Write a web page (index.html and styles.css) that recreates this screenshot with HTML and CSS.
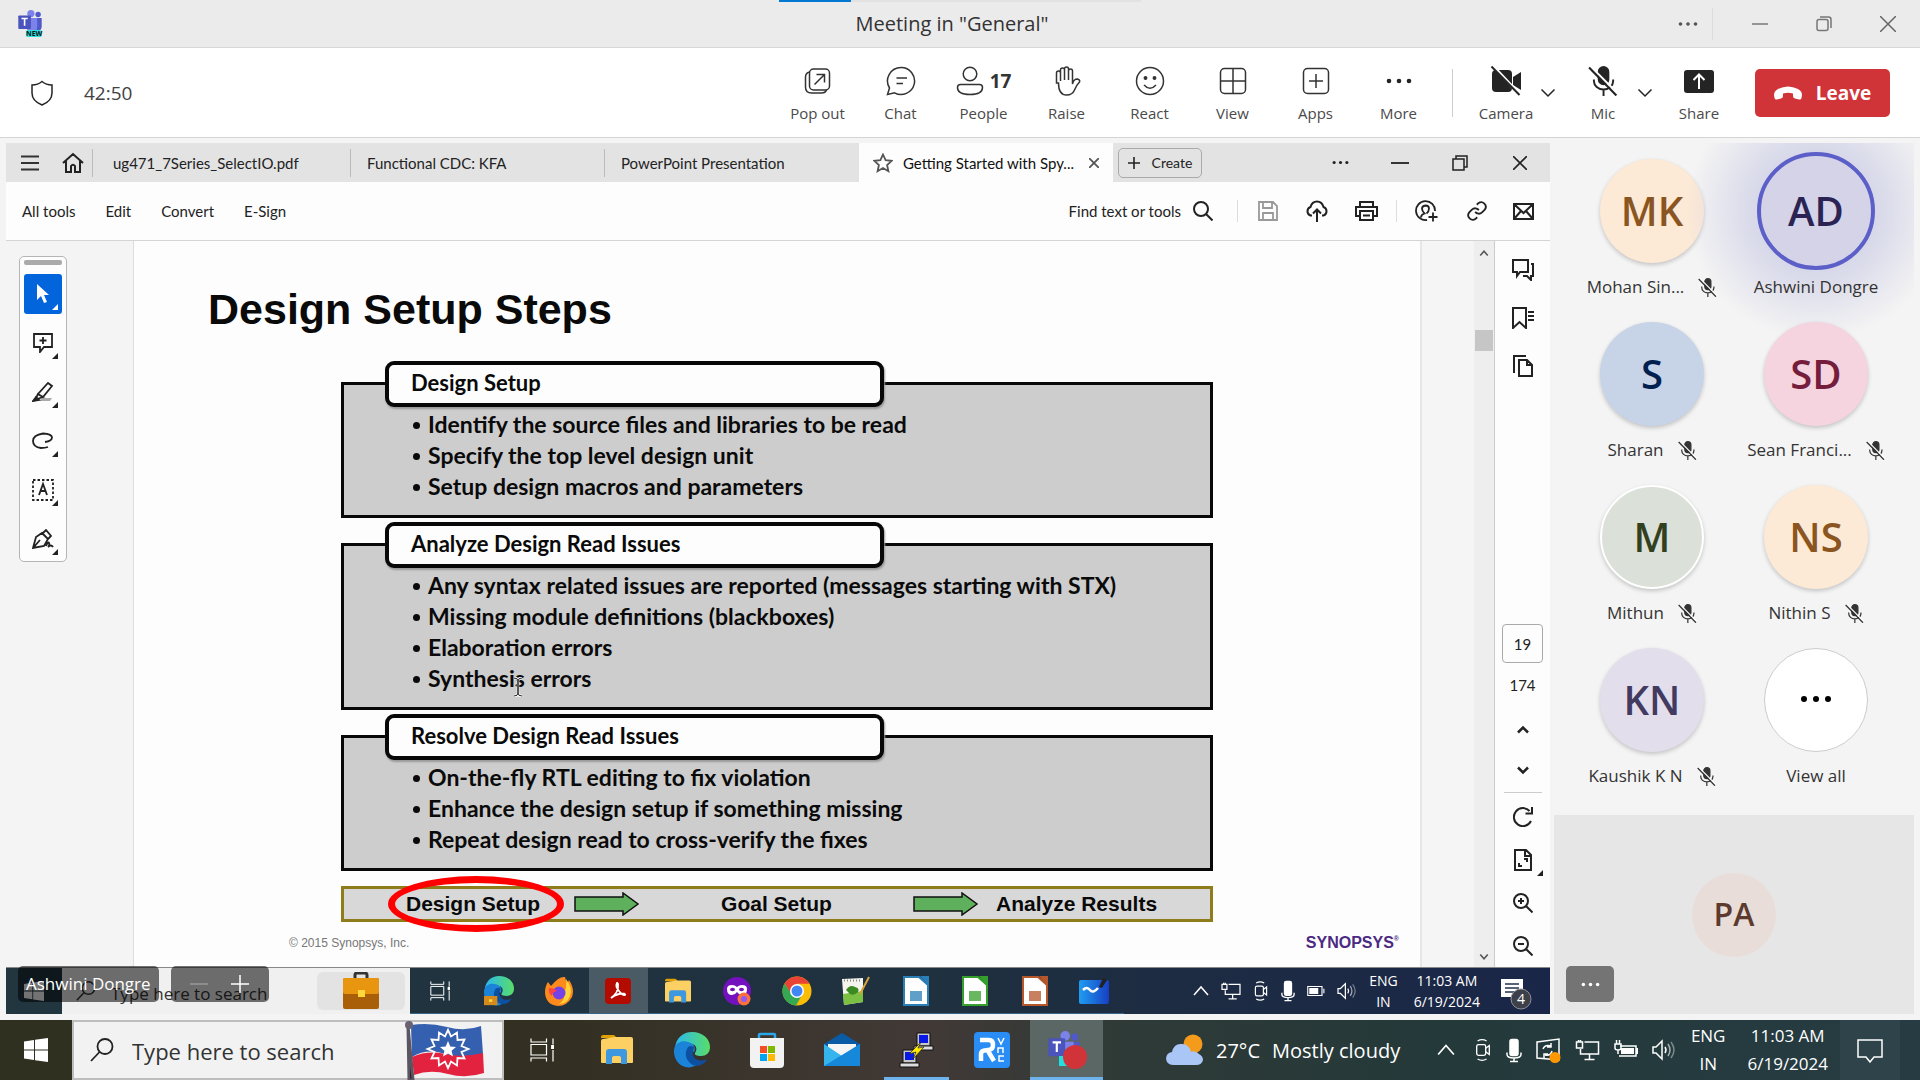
FILE: index.html
```html
<!DOCTYPE html>
<html lang="en">
<head>
<meta charset="utf-8">
<title>Meeting in "General"</title>
<link rel="stylesheet" href="styles.css">
</head>
<body>
<svg class="defs" aria-hidden="true">
  <defs>
    <symbol id="dots" viewBox="0 0 24 24"><g fill="currentColor"><circle cx="3" cy="12" r="2.2"/><circle cx="12" cy="12" r="2.2"/><circle cx="21" cy="12" r="2.2"/></g></symbol>
    <symbol id="mic-off" viewBox="0 0 28 28"><g fill="none" stroke="currentColor" stroke-width="1.8"><rect x="10" y="1" width="9" height="16" rx="4.5" fill="currentColor"/><path d="M5.500 12.500v1.500a9 8 0 0 0 18 0v-1.500M14.500 22v6"/><path d="M2.500 0.500L28 26" stroke="#fff" stroke-width="2"/><path d="M1 1.500L26.500 27.500" stroke-width="2"/></g></symbol>
    <symbol id="mic" viewBox="0 0 16 24"><g fill="none" stroke="#fff" stroke-width="1.5"><rect x="4" y="1" width="8" height="16" rx="2" fill="#fff"/><path d="M1 14v2q0 3.500 7 3.500t7-3.500v-2M8 19v3.500M4 23h8"/></g></symbol>
    <symbol id="chev-down" viewBox="0 0 16 16"><path d="M1.500 4.500L8 11l6.500-6.500" fill="none" stroke="currentColor" stroke-width="1.5"/></symbol>
    <symbol id="chev-up" viewBox="0 0 16 16"><path d="M1 12l7-8 7 8" fill="none" stroke="currentColor" stroke-width="1.5"/></symbol>
    <symbol id="lens-left" viewBox="0 0 24 24"><g fill="none" stroke="currentColor" stroke-width="1.8"><circle cx="15" cy="8.500" r="7.5"/><path d="M9.500 14L1 23"/></g></symbol>
    <symbol id="taskview" viewBox="0 0 24 24"><g fill="none" stroke="#fff" stroke-width="1.2"><path d="M1 .5v3.500h15.500V.5M1 23.500V20h15.500v3.500M1 6.500h15.500v10.500H1zM23 .5v6M23 12v11.500"/><path d="M21.700 7.500h2.300v3h-2.300z" fill="#fff"/></g></symbol>
    <symbol id="folder" viewBox="0 0 32 32"><path d="M0 3q0-2 2-2h11l3 3h-16z" fill="#e0a100"/><path d="M0 7q0-2 2-2l12-2h16q2 0 2 2v23q0 1-1 1H1q-1 0-1-1z" fill="#fdd063"/><path d="M5 18q0-3 3-3h15q3 0 3 3v12h-6v-6q0-2-2-2h-5q-2 0-2 2v6H5z" fill="#3d98e0"/></symbol>
    <symbol id="edge" viewBox="0 0 36 36"><defs><linearGradient id="eg" x1="0" x2="1"><stop offset="0" stop-color="#2bb8f0"/><stop offset="1" stop-color="#58dd68"/></linearGradient></defs><path d="M1 16C2 6 9 0 18 0c11 0 18 7 18 15 0 6-4 9-9 9-4 0-7-1-6-3 3-4 1-9-4-9-7-1-12 2-16 4z" fill="url(#eg)"/><path d="M0 18c1-8 9-10 14-8 6 1 8 6 6 10-5-3-9 1-6 6 2 4 6 6 10 6-12 9-25-1-24-14z" fill="#1b83d8"/><path d="M13 17c-3 6 0 13 6 16 6 2 12-1 14-6-5 3-12 2-14-4-1-4 1-6 1-8-3-2-6-1-7 2z" fill="#0d4fa0"/></symbol>
    <symbol id="monitor" viewBox="0 0 24 22"><g fill="none" stroke="#fff" stroke-width="1.5"><path d="M9 3h14v12H5v-5M14 15v5M9 20.500h10M1 3h6v6H1zM3 1v2M5 1v2"/></g></symbol>
    <symbol id="tray-cam" viewBox="0 0 20 26"><g fill="none" stroke="#fff" stroke-width="1.5"><rect x="3" y="7" width="10" height="12" rx="2"/><path d="M13 11l4-3v10l-4-3M4 3q5-3 10 0M4 23q5 3 10 0"/></g></symbol>
    <symbol id="battery" viewBox="0 0 24 16"><path d="M1 2h19v12H1zM22.500 5v6" fill="none" stroke="#fff" stroke-width="1.5"/><path d="M3 4h12v8H3z" fill="#fff"/></symbol>
    <symbol id="speaker" viewBox="0 0 24 22"><g fill="none" stroke="#fff" stroke-width="1.5"><path d="M1 8h3l6-6v18l-6-6H1z"/><path d="M13 8q2 3 0 6"/><path d="M16 5q4 6 0 12" opacity=".6"/><path d="M19 3q6 8 0 16" opacity=".4"/></g></symbol>
    <symbol id="windows" viewBox="0 0 24 24"><path fill="#fff" d="M0 3.500l10-1.500v9.500H0zM11 1.800L24 0v11.500H11zM0 12.500h10V22L0 20.500zM11 12.500h13V24l-13-1.800z"/></symbol>
    <symbol id="corner" viewBox="0 0 6 6"><path d="M6 0v6H0z" fill="currentColor"/></symbol>
    <symbol id="doc" viewBox="0 0 26 30"><path d="M1 1h15l9 8v20H1z" fill="#fff" stroke="currentColor" stroke-width="2"/><path d="M17 0h9v10z" fill="currentColor"/></symbol>
    <symbol id="teams" viewBox="0 0 26 30"><circle cx="14" cy="4" r="4" fill="#7b83eb"/><circle cx="22" cy="5" r="3" fill="#5059c9"/><path d="M17 9h9v9q0 5-5 5h-4z" fill="#5059c9"/><path d="M9 9h12v10q0 5-6 5t-6-5z" fill="#7b83eb"/><rect y="6" width="14" height="15" rx="1" fill="#4b53bc"/><path d="M3.500 9.500h7M7 9.500v8" stroke="#fff" stroke-width="1.8"/></symbol>
  </defs>
</svg>

<header class="titlebar">
  <div class="app-logo"><svg width="24" height="27"><use href="#teams"/></svg><span class="new-tag">NEW</span></div>
  <div class="progress"><i></i></div>
  <h1>Meeting in "General"</h1>
  <div class="win-controls">
    <button class="more" aria-label="More"><svg width="20" height="20"><use href="#dots"/></svg></button>
    <button aria-label="Minimize"><svg width="16" height="16" viewBox="0 0 16 16"><path d="M0 8h16" stroke="#777" stroke-width="1.5"/></svg></button>
    <button aria-label="Restore"><svg width="16" height="16" viewBox="0 0 16 16" fill="none" stroke="#777" stroke-width="1.5"><rect x="1" y="3.500" width="11" height="11" rx="2"/><path d="M4 1h8.500q2.500 0 2.500 2.500V12"/></svg></button>
    <button aria-label="Close"><svg width="16" height="16" viewBox="0 0 16 16"><path d="M0 0l16 16M16 0L0 16" stroke="#666" stroke-width="1.5"/></svg></button>
  </div>
</header>

<div class="toolbar">
  <svg width="24" height="26" viewBox="0 0 24 26" fill="none" stroke="#242424" stroke-width="1.5"><path d="M12 1.500q4 3.500 10 3.500v8q0 8-10 12Q2 21 2 13V5q6 0 10-3.500z"/></svg>
  <span class="timer">42:50</span>
  <nav class="actions">
    <button><svg width="30" height="30" viewBox="0 0 30 30"><rect x="6.500" y="3" width="20" height="21" rx="4"/><path d="M6.500 6Q2.500 7 2.500 11v10q0 6 6 6h10q4 0 5-3M11.500 18.500L21.500 8.500M13.500 8.500h8v8"/></svg><span>Pop out</span></button>
    <button><svg width="30" height="30" viewBox="0 0 30 30"><path d="M15 1.500a13.500 13.500 0 1 1-6.500 25.300L1.500 28.500l2-6.500A13.500 13.500 0 0 1 15 1.500zM10.500 12h10.500M10.500 17.500h6.500"/></svg><span>Chat</span></button>
    <button><span class="with-count"><svg width="28" height="30" viewBox="0 0 28 30"><circle cx="14" cy="8" r="6.800"/><path d="M4.500 18.500h19q3 0 3 3 0 7-12.500 7T1.500 21.500q0-3 3-3z"/></svg><b>17</b></span><span>People</span></button>
    <button><svg width="30" height="30" viewBox="0 0 30 30"><path d="M4.500 17V7q0-2 2-2t2 2v8V4q0-2 2-2t2 2v10V3q0-2 2-2t2 2v11V5q0-2 2-2t2 2v13q1-5 5-5 3 1 2 3-3 3-5 8-2 5-8 5-8 0-8-12z"/></svg><span>Raise</span></button>
    <button><svg width="30" height="30" viewBox="0 0 30 30"><circle cx="15" cy="15" r="13.500"/><path d="M9 19q6 6.500 12 0"/><circle cx="10.500" cy="12" r="1.200" fill="#333"/><circle cx="19.500" cy="12" r="1.200" fill="#333"/></svg><span>React</span></button>
    <button><svg width="30" height="30" viewBox="0 0 30 30"><rect x="2.500" y="2.500" width="25" height="25" rx="4"/><path d="M15 2.500v25M2.500 15h25"/></svg><span>View</span></button>
    <button><svg width="30" height="30" viewBox="0 0 30 30"><rect x="2.500" y="2.500" width="25" height="25" rx="4"/><path d="M15 8v14M8 15h14"/></svg><span>Apps</span></button>
    <button><svg class="solid" width="30" height="30" viewBox="0 0 30 30"><circle cx="5" cy="15" r="2.300"/><circle cx="15" cy="15" r="2.300"/><circle cx="25" cy="15" r="2.300"/></svg><span>More</span></button>
  </nav>
  <i class="rule"></i>
  <button class="device"><svg class="solid" width="32" height="30" viewBox="0 0 32 30"><rect x="2" y="4" width="20" height="22" rx="4"/><path d="M23 11l8-5v18l-8-5z"/><path d="M3 0l28 30" stroke="#fff" stroke-width="3"/><path d="M1.500 .5l28 28.500" stroke="#242424" stroke-width="2"/></svg><span>Camera</span></button>
  <button class="chev" aria-label="Camera options"><svg width="16" height="16"><use href="#chev-down"/></svg></button>
  <button class="device mic"><svg class="solid" width="30" height="30"><use href="#mic-off"/></svg><span>Mic</span></button>
  <button class="chev" aria-label="Mic options"><svg width="16" height="16"><use href="#chev-down"/></svg></button>
  <button class="device share"><svg class="solid" width="30" height="30" viewBox="0 0 30 30"><rect y="4" width="30" height="23" rx="3"/><path d="M15 23V9M9.500 14L15 8.500l5.500 5.500" fill="none" stroke="#fff" stroke-width="2"/></svg><span>Share</span></button>
  <button class="leave"><svg width="28" height="14" viewBox="0 0 28 14"><path fill="#fff" d="M0 9q0-4 4-6Q14-2 24 3q4 2 4 6l-.5 3q-.5 2-2.500 1.500l-4-1q-2-.5-2-2.500V7.500q-5-1.500-10 0V10q0 2-2 2.500l-4 1Q1 14 .5 12z"/></svg>Leave</button>
</div>

<main class="stage">
  <section class="shared">
    <div class="pdf-tabs">
      <button class="menu" aria-label="Menu"><svg width="18" height="16" viewBox="0 0 18 16"><path d="M0 1.500h18M0 8h18M0 14.500h18" stroke="#333" stroke-width="2"/></svg></button>
      <button class="home" aria-label="Home"><svg width="22" height="22" viewBox="0 0 22 20" fill="none" stroke="#222" stroke-width="2"><path d="M1 10L11 1l10 9M4 8v11h5v-6q2-2.500 4 0v6h5V8"/></svg></button>
      <button class="tab first">ug471_7Series_SelectIO.pdf</button>
      <button class="tab">Functional CDC: KFA</button>
      <button class="tab last">PowerPoint Presentation</button>
      <div class="tab active"><svg width="20" height="20" viewBox="0 0 20 20" fill="none" stroke="#555" stroke-width="1.8"><path d="M10 1.500l2.600 5.700 6 .6-4.500 4.200 1.300 6.200L10 15l-5.400 3.200L5.900 12 1.400 7.800l6-.6z"/></svg><span>Getting Started with Spy...</span><button aria-label="Close tab"><svg width="10" height="10" viewBox="0 0 10 10"><path d="M0 0l10 10M10 0L0 10" stroke="#555" stroke-width="1.8"/></svg></button></div>
      <button class="create"><svg width="12" height="12" viewBox="0 0 12 12"><path d="M6 0v12M0 6h12" stroke="#222" stroke-width="1.6"/></svg>Create</button>
      <div class="pdf-win">
        <button aria-label="More"><svg width="17" height="17"><use href="#dots"/></svg></button>
        <button aria-label="Minimize"><svg width="18" height="16" viewBox="0 0 18 16"><path d="M0 8h18" stroke="#222" stroke-width="1.8"/></svg></button>
        <button aria-label="Restore"><svg width="16" height="16" viewBox="0 0 16 16" fill="none" stroke="#222" stroke-width="1.5"><path d="M1 4h11v11H1zM4 4V1h11v11h-3"/></svg></button>
        <button aria-label="Close"><svg width="14" height="14" viewBox="0 0 14 14"><path d="M0 0l14 14M14 0L0 14" stroke="#222" stroke-width="1.6"/></svg></button>
      </div>
    </div>

    <div class="pdf-menu">
      <button>All tools</button><button>Edit</button><button>Convert</button><button>E-Sign</button>
      <button class="find">Find text or tools <svg width="20" height="20" viewBox="0 0 20 20" fill="none" stroke="#222" stroke-width="2"><circle cx="8" cy="8" r="7"/><path d="M13 13l6.500 6.500"/></svg></button>
      <div class="file-tools">
        <button class="wide save" aria-label="Save"><svg width="20" height="20" viewBox="0 0 20 20" fill="none" stroke="#999" stroke-width="1.8"><path d="M1 1h14l4 4v14H1zM5 1v6h9V1M5 19v-7h10v7"/></svg></button>
        <button aria-label="Upload"><svg width="24" height="22" viewBox="0 0 24 22" fill="none" stroke="#222" stroke-width="2"><path d="M7 15.500H5.500a4.500 4.500 0 0 1 0-8.500Q7 1.500 12 1.500T18.500 7a4.500 4.500 0 0 1 0 8.500H17M12 22V10M8 13.500l4-4 4 4"/></svg></button>
        <button class="wide print" aria-label="Print"><svg width="23" height="20" viewBox="0 0 23 20" fill="none" stroke="#222" stroke-width="2"><path d="M5 6V1h13v5M5 15H1V6h21v9h-4M5 10h13v9H5zM8 14.500h7"/></svg></button>
        <button class="wide" aria-label="Add person"><svg width="24" height="22" viewBox="0 0 24 22" fill="none" stroke="#222" stroke-width="1.8"><path d="M12 20A9.500 9.500 0 1 1 20 11M6 17.500q0-3 3.500-4Q7 11 7 8.500t3.500-3Q14 5.500 14 8.500t-2.500 5M18 12.500v9M13.500 17h9"/></svg></button>
        <button aria-label="Copy link"><svg width="22" height="22" viewBox="0 0 24 24" fill="none" stroke="#222" stroke-width="2"><path d="M10 13a5 5 0 0 0 7.500.5l3-3a5 5 0 0 0-7-7l-1.700 1.700M14 11a5 5 0 0 0-7.500-.5l-3 3a5 5 0 0 0 7 7l1.700-1.700"/></svg></button>
        <button class="mail" aria-label="Email"><svg width="21" height="17" viewBox="0 0 21 17" fill="none" stroke="#222" stroke-width="2"><path d="M1 1h19v15H1zM1 1l9.500 9L20 1M1 16l7-8M20 16l-7-8"/></svg></button>
      </div>
    </div>

    <div class="pdf-body">
      <aside class="gutter">
        <div class="toolbox">
          <i class="grip"></i>
          <button class="on" aria-label="Select"><svg width="14" height="20" viewBox="0 0 14 20"><path d="M1 0v16l4-4 3 7 3-1-3-7h5z" fill="#fff"/></svg><svg class="corner" width="6" height="6"><use href="#corner"/></svg></button>
          <button aria-label="Comment"><svg width="20" height="20" viewBox="0 0 20 20"><path d="M1 1h18v13h-8l-4 5v-5H1zM10 4v7M6.500 7.500h7"/></svg><svg class="corner" width="6" height="6"><use href="#corner"/></svg></button>
          <button aria-label="Highlight"><svg width="22" height="20" viewBox="0 0 22 20"><path d="M10 16h10l-2 3H7z" fill="#aaa" stroke="none"/><path d="M16 1l4 3L11 15l-5-3zM6 12l-3 6 5-2 3-1z"/><path d="M1 19l3-4 3 3z" fill="#222"/></svg><svg class="corner" width="6" height="6"><use href="#corner"/></svg></button>
          <button aria-label="Draw"><svg width="22" height="18" viewBox="0 0 22 18"><path d="M13 10q7-1 7-4.500T11 1.500Q1 3 1 9q0 6 8 7 4 0 7-1"/></svg><svg class="corner" width="6" height="6"><use href="#corner"/></svg></button>
          <button aria-label="Text"><svg width="22" height="22" viewBox="0 0 22 22"><rect x="1" y="1" width="20" height="20" stroke-dasharray="2.500 2"/><path d="M7 16l4-11 4 11M8.500 12h5"/></svg><svg class="corner" width="6" height="6"><use href="#corner"/></svg></button>
          <button aria-label="Sign"><svg width="22" height="20" viewBox="0 0 22 20"><path d="M1 19L4 8l6-4 6 6-4 7zM1 19l7-8M11 4l3-3 5 6-3 3M14 17q2-5 3-3t-1 4q3-3 5 0"/></svg><svg class="corner" width="6" height="6"><use href="#corner"/></svg></button>
        </div>
      </aside>

      <article class="slide">
        <h2>Design Setup Steps</h2>
        <div class="slide-content">
          <section class="step">
            <h3>Design Setup</h3>
            <ul><li>Identify the source files and libraries to be read</li><li>Specify the top level design unit</li><li>Setup design macros and parameters</li></ul>
          </section>
          <section class="step">
            <h3>Analyze Design Read Issues</h3>
            <ul><li>Any syntax related issues are reported (messages starting with STX)</li><li>Missing module definitions (blackboxes)</li><li>Elaboration errors</li><li class="pointed">Synthesis errors<svg class="ibeam" width="10" height="20" viewBox="0 0 10 20"><path d="M1 1q4 0 4 3v12q0 3-4 3M9 1q-4 0-4 3v12q0 3 4 3" fill="none" stroke="#fff" stroke-width="2.5"/><path d="M1 1q4 0 4 3v12q0 3-4 3M9 1q-4 0-4 3v12q0 3 4 3" fill="none" stroke="#222"/></svg></li></ul>
          </section>
          <section class="step">
            <h3>Resolve Design Read Issues</h3>
            <ul><li>On-the-fly RTL editing to fix violation</li><li>Enhance the design setup if something missing</li><li>Repeat design read to cross-verify the fixes</li></ul>
          </section>
          <div class="flow">
            <span class="current">Design Setup</span>
            <svg width="66" height="24" viewBox="0 0 66 24"><path d="M1 5h48V1l15 11-15 11v-4H1z" fill="#5fb05c" stroke="#111" stroke-width="1.5"/></svg>
            <span class="goal">Goal Setup</span>
            <svg width="66" height="24" viewBox="0 0 66 24"><path d="M1 5h48V1l15 11-15 11v-4H1z" fill="#5fb05c" stroke="#111" stroke-width="1.5"/></svg>
            <span class="results">Analyze Results</span>
          </div>
        </div>
        <footer><small>© 2015 Synopsys, Inc.</small><strong>SYNOPSYS<sup>®</sup></strong></footer>
      </article>

      <div class="scroll-area">
        <div class="scrollbar">
          <svg width="10" height="10" viewBox="0 0 16 16"><path d="M2 12l6-7 6 7" fill="none" stroke="#555" stroke-width="2.5"/></svg>
          <i class="thumb"></i>
          <svg width="10" height="10" viewBox="0 0 16 16"><path d="M2 4l6 7 6-7" fill="none" stroke="#555" stroke-width="2.5"/></svg>
        </div>
      </div>

      <aside class="rail">
        <button aria-label="Comments"><svg width="22" height="22" viewBox="0 0 22 22"><path d="M1 1h15v12H8l-3 4v-4H1zM19 5h2v12h-2v4l-4-4h-4"/></svg></button>
        <button aria-label="Bookmarks"><svg width="22" height="22" viewBox="0 0 22 22"><path d="M1 1h13v20l-6.500-6L1 21zM16 5h6M16 9h6M16 13h6"/></svg></button>
        <button aria-label="Pages"><svg width="22" height="22" viewBox="0 0 22 22"><path d="M7 5h8l5 5v11H7zM15 5v5h5M3 17H2V1h11v1"/></svg></button>
        <input class="page-no" aria-label="Page" value="19">
        <span class="page-total">174</span>
        <button class="step-btn" aria-label="Previous page"><svg width="14" height="14" viewBox="0 0 14 14"><path d="M2 9.500l5-5 5 5" stroke-width="2.5"/></svg></button>
        <button class="step-btn" aria-label="Next page"><svg width="14" height="14" viewBox="0 0 14 14"><path d="M2 4.500l5 5 5-5" stroke-width="2.5"/></svg></button>
        <hr>
        <button class="zoom" aria-label="Rotate"><svg width="20" height="20" viewBox="0 0 20 20"><path d="M18 14A9 9 0 1 1 16.500 4M19 0v6.500h-6.500"/></svg></button>
        <button class="zoom" aria-label="Fit"><svg width="20" height="22" viewBox="0 0 20 22"><path d="M2 1h11l5 5v15H2zM12 1v6h6M6 14v3h3M11 10h3v3"/></svg><svg class="corner" width="6" height="6"><use href="#corner"/></svg></button>
        <button class="zoom" aria-label="Zoom in"><svg width="20" height="20" viewBox="0 0 20 20"><circle cx="8" cy="8" r="7"/><path d="M13 13l6.500 6.500M8 5v6M5 8h6"/></svg></button>
        <button class="zoom" aria-label="Zoom out"><svg width="20" height="20" viewBox="0 0 20 20"><circle cx="8" cy="8" r="7"/><path d="M13 13l6.500 6.500M5 8h6"/></svg></button>
      </aside>
    </div>

    <div class="remote-bar">
      <div class="r-start"><svg width="20" height="20"><use href="#windows"/></svg></div>
      <label class="r-search"><svg width="20" height="22"><use href="#lens-left"/></svg><input placeholder="Type here to search" aria-label="Type here to search"><span class="case"><svg width="38" height="38" viewBox="0 0 38 38"><path d="M13 7V3q0-2 2-2h8q2 0 2 2v4" fill="none" stroke="#333" stroke-width="3"/><rect x="1" y="6" width="36" height="31" rx="2" fill="#a85f08"/><rect x="1" y="6" width="36" height="16" rx="2" fill="#e8950f"/><rect x="16" y="18" width="7" height="7" fill="#ffd83b"/></svg></span></label>
      <div class="r-apps">
        <span><svg width="20" height="20"><use href="#taskview"/></svg></span>
        <span><svg width="30" height="30" viewBox="0 0 36 36"><use href="#edge" width="36" height="36"/><path d="M0 24h16v11H0z" fill="#d58a1c"/><path d="M6 28h4v3H6z" fill="#ffd83b"/></svg></span>
        <span><svg width="28" height="30" viewBox="0 0 28 30"><path d="M3 6l3 4Q14 0 20 1l2 7 2-4q6 9 3 17-5 9-14 9Q1 29 0 17 0 10 3 6z" fill="#ff8a1c"/><path d="M21 3q7 9 4 17-3 8-11 8 6-3 5-11 3-5 2-14z" fill="#ffd43a"/><circle cx="14" cy="17" r="6.500" fill="#7542e5"/><path d="M4 12q5 0 8 3-5 1-5 5-4-3-3-8z" fill="#ff4343"/></svg></span>
        <span class="lit"><svg width="26" height="26" viewBox="0 0 26 26"><rect width="26" height="26" rx="4" fill="#b30b00"/><path d="M6 20q8-6 7-13 0-2-1-2-2 3 2 8 4 5 6 4 1-2-6-1-5 1-8 4z" fill="none" stroke="#fff" stroke-width="1.8"/></svg></span>
        <span><svg width="26" height="26"><use href="#folder"/></svg></span>
        <span><svg width="30" height="30" viewBox="0 0 30 30"><circle cx="15" cy="15" r="14" fill="#7211bd"/><path d="M5 13q0-4 5-4 3 0 5 2 2-2 5-2 5 0 5 4 0 6-5 6-3 0-5-3-2 3-5 3-5 0-5-6z" fill="#fff"/><ellipse cx="10.500" cy="13.500" rx="2.500" ry="1.700" fill="#7211bd"/><ellipse cx="19.500" cy="13.500" rx="2.500" ry="1.700" fill="#7211bd"/><circle cx="22" cy="23" r="6.500" fill="#ff7139"/><circle cx="22" cy="23" r="3" fill="#9059ff"/></svg></span>
        <span><svg width="30" height="30" viewBox="0 0 30 30"><circle cx="15" cy="15" r="14.500" fill="#fbbc05"/><path d="M2.500 7.500A14.500 14.500 0 0 1 27.500 7.700H15L9 18z" fill="#ea4335"/><path d="M2.500 7.500A14.500 14.500 0 0 0 14 29.500L20 19H10z" fill="#34a853"/><circle cx="15" cy="15" r="7" fill="#fff"/><circle cx="15" cy="15" r="5.500" fill="#4285f4"/></svg></span>
        <span><svg width="28" height="30" viewBox="0 0 28 30"><path d="M0 3l21-1v24L2 29z" fill="#f4f6ee"/><path d="M1 18l20-3v11L2 29z" fill="#7bc043"/><path d="M4 14q4-6 9-3 5 1 3 5-4 4-8 2z" fill="#3c8a22"/><path d="M2 4.500h18" stroke="#888" stroke-dasharray="1 2" stroke-width="2"/><path d="M27 1l-9 17" stroke="#d8a23b" stroke-width="2"/></svg></span>
        <span class="blue"><svg width="26" height="30"><use href="#doc"/></svg><i></i></span>
        <span class="green"><svg width="26" height="30"><use href="#doc"/></svg><i></i></span>
        <span class="brown"><svg width="26" height="30"><use href="#doc"/></svg><i></i></span>
        <span><svg width="30" height="26" viewBox="0 0 30 26"><defs><linearGradient id="wb" x1="0" x2="1"><stop stop-color="#1f9df0"/><stop offset="1" stop-color="#173fc4"/></linearGradient></defs><rect y="2" width="30" height="24" rx="2" fill="url(#wb)"/><path d="M4 12q4-4 7 0t8-2" fill="none" stroke="#fff" stroke-width="2.5"/><path d="M20 9l4-9 4 2-5 8z" fill="#222"/></svg></span>
      </div>
      <div class="r-tray">
        <svg width="16" height="16"><use href="#chev-up"/></svg>
        <svg width="20" height="18"><use href="#monitor"/></svg>
        <svg width="16" height="22"><use href="#tray-cam"/></svg>
        <svg width="14" height="24"><use href="#mic"/></svg>
        <svg width="18" height="14"><use href="#battery"/></svg>
        <svg width="20" height="18"><use href="#speaker"/></svg>
        <div class="lines">ENG<br>IN</div>
        <div class="lines time">11:03 AM<br>6/19/2024</div>
        <svg class="notice" width="32" height="32" viewBox="0 0 32 32"><path d="M1 1h22v18h-8l-4 5v-5H1z" fill="#fff"/><path d="M5 6h14M5 10h14M5 14h10" stroke="#22304c" stroke-width="1.5"/><circle cx="21" cy="21" r="10" fill="#3d4048" stroke="#8b8e95"/><text x="21" y="26" text-anchor="middle" fill="#fff">4</text></svg>
      </div>
    </div>

    <div class="overlay-tags">
      <span class="presenter">Ashwini Dongre</span>
      <span class="zoomer"><button class="dim" aria-label="Zoom out"><svg width="18" height="18" viewBox="0 0 18 18"><path d="M0 9h18" stroke="currentColor" stroke-width="1.5"/></svg></button><button aria-label="Zoom in"><svg width="18" height="18" viewBox="0 0 18 18"><path d="M0 9h18M9 0v18" stroke="currentColor" stroke-width="1.5"/></svg></button></span>
    </div>
  </section>

  <aside class="people">
    <div class="grid">
      <div class="person"><div class="avatar orange">MK</div><p>Mohan Sin...<svg width="19" height="19"><use href="#mic-off"/></svg></p></div>
      <div class="person speaking"><div class="avatar indigo">AD</div><p>Ashwini Dongre</p></div>
      <div class="person"><div class="avatar navy">S</div><p>Sharan<svg width="19" height="19"><use href="#mic-off"/></svg></p></div>
      <div class="person"><div class="avatar pink">SD</div><p>Sean Franci...<svg width="19" height="19"><use href="#mic-off"/></svg></p></div>
      <div class="person"><div class="avatar forest">M</div><p>Mithun<svg width="19" height="19"><use href="#mic-off"/></svg></p></div>
      <div class="person"><div class="avatar orange">NS</div><p>Nithin S<svg width="19" height="19"><use href="#mic-off"/></svg></p></div>
      <div class="person"><div class="avatar violet">KN</div><p>Kaushik K N<svg width="19" height="19"><use href="#mic-off"/></svg></p></div>
      <div class="person"><button class="avatar all" aria-label="View all"><svg width="32" height="32" viewBox="0 0 32 32"><circle cx="4" cy="16" r="3"/><circle cx="16" cy="16" r="3"/><circle cx="28" cy="16" r="3"/></svg></button><p>View all</p></div>
    </div>
    <div class="self"><div class="avatar brick">PA</div><button aria-label="More options"><svg width="19" height="19"><use href="#dots"/></svg></button></div>
  </aside>
</main>

<footer class="taskbar">
  <button class="start" aria-label="Start"><svg width="24" height="24"><use href="#windows"/></svg></button>
  <label class="search"><svg width="24" height="24"><use href="#lens-left"/></svg><input placeholder="Type here to search" aria-label="Type here to search">
    <svg class="flag" width="84" height="60" viewBox="0 0 84 60"><path d="M8 5q18-3 36 2t34-1l2 28q-20 6-38 0T9 37z" fill="#3560b0"/><path d="M9 37q16-7 33-3t38-1l1 20q-18 6-36 1T11 55z" fill="#e3223f"/><path d="M5 6l5 54h-4z" stroke="#5b5562" stroke-width="3"/><circle cx="6" cy="5" r="4" fill="#6a6272"/><path transform="translate(45 29)" d="M0-19l3 6.500 6-4 .5 7.500 7-.5-3 6.500 7 3-7 3 3 6.500-7-.5-.5 7.500-6-4-3 6.500-3-6.500-6 4-.5-7.500-7 .5 3-6.500-7-3 7-3-3-6.500 7 .5.500-7.500 6 4z" fill="none" stroke="#fff" stroke-width="1.8"/><path transform="translate(45 29)" d="M0-8l2.300 5.500 5.700.5-4.400 3.700L5 7.500 0 4.500l-5 3 1.400-5.800L-8-2l5.700-.5z" fill="#fff"/></svg>
  </label>
  <div class="apps">
    <button aria-label="Task view"><svg width="24" height="24"><use href="#taskview"/></svg></button>
    <button aria-label="File Explorer"><svg width="32" height="34"><use href="#folder"/></svg></button>
    <button aria-label="Edge"><svg width="36" height="36"><use href="#edge"/></svg></button>
    <button aria-label="Store"><svg width="36" height="36" viewBox="0 0 36 36"><path d="M10 8V3q0-1 1-1h14q1 0 1 1v5" fill="none" stroke="#2aa7ea" stroke-width="2.5"/><path d="M1 6h34v26q0 4-4 4H5q-4 0-4-4z" fill="#f2f2f2"/><path d="M11 14h7v7h-7z" fill="#f25022"/><path d="M19 14h7v7h-7z" fill="#7fba00"/><path d="M11 22h7v7h-7z" fill="#00a4ef"/><path d="M19 22h7v7h-7z" fill="#ffb900"/></svg></button>
    <button aria-label="Mail"><svg width="36" height="36" viewBox="0 0 36 36"><path d="M0 12L18 1l18 11v6H0z" fill="#0a5ba5"/><path d="M4 12h28v12H4z" fill="#f5f5f5"/><path d="M0 12l18 12L36 12v22H0z" fill="#36b4ee"/><path d="M36 12v22H0z" fill="#1688da"/></svg></button>
    <button class="running" aria-label="PuTTY"><svg width="36" height="36" viewBox="0 0 36 36"><g stroke="#111"><path d="M18 1h13v13H18zM4 18h13v13H4z" fill="#c8c8c8"/><path d="M15 14h19v4H15zM1 31h19v4H1z" fill="#ddd"/></g><path d="M20 3h9v8h-9zM6 20h9v8H6z" fill="#0818e8"/><path d="M22 10l-12 12 7-2-3 7 11-12-6 1z" fill="#ffe900" stroke="#222" stroke-width=".7"/></svg></button>
    <button aria-label="VNC"><svg width="36" height="36" viewBox="0 0 36 36"><rect width="36" height="36" rx="4" fill="#2a8df5"/><path d="M6 8h9q4 0 4 5t-5 5q-7 0-7 4v7M14 19l6 10" fill="none" stroke="#fff" stroke-width="4.5"/><path d="M24 6l3 6 3-6M24 21v-5h5v5M30 24h-5v5h5" fill="none" stroke="#fff" stroke-width="1.5"/></svg></button>
    <button class="running focus" aria-label="Teams"><svg width="40" height="38" viewBox="0 0 40 38"><use href="#teams" width="34" height="36"/><path d="M12 25h8v10h-8z" fill="#20e0e0"/><circle cx="28" cy="26" r="12" fill="#d13438"/></svg></button>
  </div>
  <button class="weather"><svg width="38" height="32" viewBox="0 0 38 32"><circle cx="27" cy="10" r="9.500" fill="#f59b1c"/><path d="M8 31q-7 0-8-6 0-6 6-7 2-9 10-8 7 0 9 8 4-2 8 2 4 2 4 6-1 5-7 5z" fill="#a9c6f7"/></svg><span>27°C</span><span>Mostly cloudy</span></button>
  <div class="tray">
    <svg class="expand" width="18" height="18"><use href="#chev-up"/></svg>
    <svg width="18" height="24"><use href="#tray-cam"/></svg>
    <svg width="16" height="25"><use href="#mic"/></svg>
    <svg width="25" height="25" viewBox="0 0 25 25"><path d="M1 4l22-3v21L1 20z" fill="none" stroke="#fff" stroke-width="1.5"/><path d="M7 11q2-5 8-3M15 5v4h-4M16 13q-1 5-7 4M8 20v-4h4" fill="none" stroke="#fff" stroke-width="1.5"/><circle cx="19" cy="19.500" r="5.500" fill="#ff9800"/></svg>
    <svg width="25" height="22"><use href="#monitor"/></svg>
    <svg width="24" height="20" viewBox="0 0 24 20"><path d="M6 6h16v10H5M23.500 8v6M1 4h6v4q0 2-3 2t-3-2zM2.500 0v4M5.500 0v4M4 10v4" fill="none" stroke="#fff" stroke-width="1.5"/><path d="M7 8h13v6H7z" fill="#fff"/></svg>
    <svg width="24" height="22"><use href="#speaker"/></svg>
  </div>
  <div class="lines lang">ENG<br>IN</div>
  <div class="lines clock">11:03 AM<br>6/19/2024</div>
  <button class="center" aria-label="Notifications"><svg width="26" height="26" viewBox="0 0 26 26"><path d="M1 3h24v17h-8l-4 5-4-5H1z" fill="none" stroke="#fff" stroke-width="1.5"/></svg></button>
</footer>
</body>
</html>
```

FILE: styles.css
```css
*, *::before, *::after { box-sizing: border-box; }
body { margin: 0; min-height: 100vh; display: flex; flex-direction: column; background: #f4f4f4; color: #242424; font-family: "Open Sans", "Noto Sans", sans-serif; }
button { border: 0; padding: 0; margin: 0; background: none; color: inherit; font: inherit; }
input { border: 0; padding: 0; background: none; font: inherit; color: inherit; min-width: 0; }
svg { flex: none; display: block; }
.defs { position: absolute; width: 0; height: 0; }

/* Window title bar */
.titlebar { height: 48px; display: grid; grid-template-columns: 1fr auto 1fr; align-items: center; background: #ebebeb; border-bottom: 1px solid #d6d6d6; position: relative; }
.titlebar h1 { margin: 0 16px 0 0; font-size: 20px; line-height: 28px; font-weight: 400; color: #333; }
.app-logo { position: relative; margin-left: 18px; width: 24px; }
.new-tag { position: absolute; left: 8px; bottom: 0; background: #2ce0e0; color: #111; font-size: 7px; line-height: 7px; font-weight: 700; border-radius: 2px; }
.progress { position: absolute; top: 0; left: 779px; width: 362px; height: 2px; background: #e2e2e2; }
.progress i { display: block; width: 72px; height: 2px; background: #0078d4; }
.win-controls { display: flex; justify-content: flex-end; color: #555; }
.win-controls button { width: 64px; height: 32px; display: grid; place-items: center; }
.win-controls .more { width: 50px; margin-right: 15px; border-right: 1px solid #ddd; }

/* Call toolbar */
.toolbar { height: 90px; display: flex; align-items: center; padding: 0 30px; background: #fff; border-bottom: 1px solid #d4d4d4; }
.timer { margin-left: 30px; font-size: 19px; line-height: 28px; color: #424242; }
.actions { display: flex; margin-left: auto; }
.actions button { width: 83px; }
.actions button, .device { display: flex; flex-direction: column; align-items: center; gap: 7px; font-size: 15px; line-height: 20px; color: #4a4a4a; padding-top: 3px; }
.actions svg { fill: none; stroke: #333; stroke-width: 1.5; }
.actions .solid, .device .solid { fill: #242424; stroke: none; color: #242424; }
.with-count { display: flex; align-items: center; gap: 6px; font-size: 19px; }
.with-count b { font-weight: 700; color: #333; }
.rule { width: 1px; height: 48px; background: #cfcfcf; margin: 0 19px 0 12px; }
.device { width: 68px; }
.mic { margin-left: 13px; }
.share { margin-left: 12px; }
.chev { width: 16px; }
.leave { margin-left: 22px; width: 135px; height: 48px; display: flex; align-items: center; justify-content: center; gap: 14px; border-radius: 5px; background: #d13438; color: #fff; font-size: 19px; font-weight: 700; }

/* Stage */
.stage { flex: 1; display: grid; grid-template-columns: minmax(0, 1fr) 360px; gap: 4px; padding: 5px 6px 6px; }
.shared { position: relative; display: flex; flex-direction: column; background: #fdfdfd; color: #222; font-family: Lato, "Open Sans", sans-serif; font-size: 15px; }

.pdf-tabs { height: 39px; display: flex; align-items: center; background: #e3e3e3; }
.pdf-tabs button { display: flex; align-items: center; justify-content: center; }
.menu { width: 48px; }
.pdf-tabs .home { width: 39px; height: 28px; border-right: 1px solid #bbb; }
.pdf-tabs .tab { width: 254px; height: 28px; padding: 0 16px; display: flex; justify-content: flex-start; border-right: 1px solid #bbb; }
.pdf-tabs .first { width: 258px; padding-left: 20px; }
.pdf-tabs .last { border: 0; }
.pdf-tabs .active { height: 39px; border: 0; background: #fdfdfd; align-items: center; gap: 10px; padding: 0 14px; white-space: nowrap; color: #111; }
.pdf-tabs .active button { margin: 0 0 0 auto; }
.active { font-size: 15px; }
.pdf-tabs .create { width: 84px; height: 30px; margin-left: 5px; gap: 12px; border: 1px solid #aaa; border-radius: 5px; font-size: 14px; }
.pdf-win { margin-left: auto; display: flex; }
.pdf-win button { width: 60px; }

.pdf-menu { height: 59px; display: flex; align-items: center; gap: 30px; padding-left: 16px; border-bottom: 1px solid #d4d4d4; }
.pdf-menu button { display: flex; align-items: center; }
.pdf-menu .find { margin-left: auto; gap: 12px; }
.file-tools { display: flex; align-items: center; margin-left: -6px; }
.file-tools button { width: 40px; height: 22px; justify-content: center; }
.file-tools .wide { width: 60px; }
.file-tools .mail { width: 53px; }
.file-tools .save { border-left: 1px solid #ddd; }
.file-tools .print { border-right: 1px solid #ddd; }

.pdf-body { flex: 1; display: flex; }
.gutter { width: 128px; padding: 15px 13px; background: #f4f4f4; border-right: 1px solid #ddd; }
.toolbox { width: 48px; padding: 3px 4px 2px; display: flex; flex-direction: column; gap: 9px; background: #fdfdfd; border: 1px solid #b5b5b5; border-radius: 5px; }
.grip { height: 5px; border-radius: 2px; background: #aaa; }
.toolbox button { position: relative; height: 40px; display: grid; place-items: center; color: #222; }
.toolbox button > svg:first-child { fill: none; stroke: #222; stroke-width: 1.8; }
.toolbox .on { background: #0265dc; border-radius: 3px; color: #fff; }
.toolbox .on > svg:first-child { stroke: none; }
.corner { position: absolute; right: 4px; bottom: 4px; }

.slide { flex: 1; display: flex; flex-direction: column; padding: 42px 0 0 74px; color: #0a0a0a; }
.slide h2 { margin: 0; font: 700 43px/52px "Liberation Sans", Arial, sans-serif; }
.slide-content { width: 872px; margin: 47px 0 0 133px; }
.step { height: 136px; border: 3px solid #080808; background: #cdcdcd; margin-bottom: 25px; padding-left: 41px; }
.step:nth-child(2) { height: 167px; }
.step h3 { width: 499px; height: 46px; margin: -24px 0 0; padding: 0 22px; border: 4px solid #080808; border-radius: 9px; background: #fdfdfd; box-shadow: 1px 2px 2px #999; font-size: 22px; line-height: 36px; font-weight: 700; }
.step ul { margin: 2px 0 0; padding: 0 0 0 43px; font-size: 23px; line-height: 31px; font-weight: 700; list-style: none; }
.step li { display: flex; align-items: center; }
.step li::before { content: ""; width: 7px; height: 7px; margin: 2px 8px 0 -15px; border-radius: 50%; background: #0a0a0a; }
.pointed { position: relative; }
.ibeam { position: absolute; left: 85px; top: 14px; }
.flow { margin-top: -10px; height: 36px; display: flex; align-items: center; border: 3px solid #8f7d1b; background: #d8d8d8; font: 700 21px/28px "Liberation Sans", Arial, sans-serif; }
.flow .current { position: relative; width: 230px; padding-left: 62px; }
.current::after { content: ""; position: absolute; left: 44px; top: -14px; width: 176px; height: 56px; border: 7px solid #f00; border-radius: 50%; }
.flow .goal { width: 273px; text-align: center; }
.flow .results { padding-left: 17px; }
.slide footer { display: flex; justify-content: space-between; align-items: center; padding: 7px 21px 0 81px; font-family: "Liberation Sans", Arial, sans-serif; }
.slide small { font-size: 12px; color: #777; }
.slide strong { display: flex; font-size: 16px; line-height: 28px; color: #4b2a83; }
.slide sup { font-size: 7px; line-height: 20px; }

.scroll-area { width: 75px; display: flex; justify-content: flex-end; background: #f5f5f5; border-left: 2px solid #e6e6e6; border-right: 1px solid #ccc; }
.scrollbar { width: 20px; padding: 7px 0 5px; display: flex; flex-direction: column; align-items: center; background: #eee; }
.thumb { width: 18px; height: 21px; margin: 72px 0 auto; background: #c6c6c6; }
.rail { width: 55px; padding-top: 5px; display: flex; flex-direction: column; align-items: center; }
.rail button { position: relative; width: 48px; height: 48px; display: grid; place-items: center; }
.rail svg { fill: none; stroke: #222; stroke-width: 2; }
.rail .corner { stroke: none; fill: #222; bottom: 5px; }
.rail .step-btn { height: 40px; }
.rail .zoom { height: 43px; }
.rail hr { width: 38px; margin: 2px 0; border: 0; border-top: 1px solid #ccc; }
.page-no { width: 41px; height: 39px; margin-top: auto; border: 1px solid #aaa; border-radius: 4px; text-align: center; font-size: 15px; }
.page-total { margin: 2px 0 5px; font-size: 15px; line-height: 40px; }

/* Taskbar inside the shared screen */
.remote-bar { height: 47px; display: flex; align-items: stretch; background: linear-gradient(90deg, #21363f, #1f303f 60%, #1a2648); color: #fff; font-family: "Open Sans", sans-serif; border-top: 1px solid #888; }
.r-start { width: 56px; display: grid; place-items: center; }
.r-search { width: 348px; display: flex; align-items: center; background: #f0f0f0; color: #333; padding: 0 5px 0 14px; font-size: 17px; }
.r-search input { flex: 1; margin-left: 15px; padding-top: 4px; }
.r-search input::placeholder, .search input::placeholder { color: #333; opacity: 1; }
.case { width: 88px; height: 38px; display: grid; place-items: center; background: #e3e3e3; border-radius: 6px; }
.r-apps { display: flex; flex: 1; max-width: 714px; }
.r-apps span { flex: 1; position: relative; display: grid; place-items: center; border-bottom: 1px solid #35658a; }
.r-apps .lit { background: #4a5b66; }
.blue { color: #2a7fb8; }
.green { color: #35a02c; }
.brown { color: #b5562b; }
.r-apps span i { position: absolute; width: 12px; height: 10px; bottom: 12px; background: currentColor; opacity: .75; }
.r-tray { margin-left: auto; padding-right: 18px; display: flex; align-items: center; gap: 12px; }
.lines { text-align: center; font-size: 14px; line-height: 21px; color: #fff; }
.time { margin: 0 8px 0 4px; }
.notice { font-size: 14px; margin-top: 6px; }

.overlay-tags { position: absolute; left: 12px; bottom: 12px; display: flex; gap: 12px; color: #fff; font-family: "Open Sans", sans-serif; }
.overlay-tags > span { height: 36px; padding: 0 8px; border-radius: 5px; background: rgba(0, 0, 0, .55); font-size: 17px; line-height: 36px; white-space: nowrap; }
.overlay-tags .zoomer { width: 98px; display: flex; align-items: center; justify-content: space-around; }
.dim { color: #999; }

/* Participants */
.people { display: flex; flex-direction: column; overflow: hidden; }
.grid { display: grid; grid-template-columns: 1fr 1fr; row-gap: 23px; padding: 16px 16px 27px; }
.person { position: relative; display: flex; flex-direction: column; align-items: center; }
.person p { position: relative; margin: 12px 0 0; display: flex; align-items: center; gap: 14px; font-size: 17px; line-height: 24px; color: #333; white-space: nowrap; }
.avatar { position: relative; width: 104px; height: 104px; padding-bottom: 2px; border-radius: 50%; display: grid; place-items: center; font-size: 40px; font-weight: 600; box-shadow: 0 2px 4px rgba(0, 0, 0, .2); }
.orange { background: #fce9d6; color: #8a5521; }
.indigo { background: #d5d3e8; color: #2a2354; }
.navy { background: #c7d3e7; color: #00214f; }
.pink { background: #f5d3df; color: #751d3c; }
.forest { background: #dbe1d8; color: #33401f; border: 2px solid #fff; }
.violet { background: #e2deec; color: #433a60; }
.people .all { background: #fff; border: 1px solid #ccc; box-shadow: none; }
.people .brick { width: 84px; height: 84px; background: #e9ddd9; color: #5c3a2d; font-size: 32px; box-shadow: none; }
.speaking::before { content: ""; position: absolute; left: -70px; top: -90px; width: 304px; height: 284px; background: radial-gradient(circle, #cfd0e6 20%, rgba(244, 244, 244, 0) 62%); }
.speaking .avatar { outline: 4px solid #5b5fc7; outline-offset: 3px; box-shadow: 0 0 0 4px #d5d3e8; }
.self { flex: 1; position: relative; display: grid; place-items: center; background: #e6e6e6; }
.self button { position: absolute; left: 12px; bottom: 12px; width: 48px; height: 36px; display: grid; place-items: center; border-radius: 5px; background: #747474; color: #fff; }

/* Desktop taskbar */
.taskbar { height: 60px; display: flex; align-items: stretch; background: linear-gradient(90deg, #2f3020, #333023 30%, #423936 48%, #2f3a37 58%, #24393a 75%, #263c42); color: #fff; }
.taskbar button { display: grid; place-items: center; }
.start { width: 72px; }
.search { width: 432px; display: flex; align-items: center; padding-left: 16px; border: 2px solid #bdbdbd; background: #f2f2f2; color: #222; font-size: 22px; }
.search input { flex: 1; margin-left: 18px; padding-top: 2px; }
.flag { margin: -2px 15px -2px 0; }
.apps { display: flex; }
.apps button { width: 75px; }
.running { border-bottom: 3px solid #6db3ee; border-top: 3px solid transparent; }
.apps .running { width: 65px; margin: 0 5px; }
.apps .focus { width: 73px; margin: 0 0 0 1px; background-color: #5a6765; }
.weather { margin-left: 62px; font-size: 20px; }
.taskbar .weather { display: flex; align-items: center; gap: 12px; margin-left: 63px; }
.tray { margin-left: auto; display: flex; align-items: center; gap: 14px; }
.expand { margin-right: 5px; }
.taskbar > .lines { font-size: 17px; line-height: 28px; padding-top: 2px; }
.lang { margin-left: 15px; }
.clock { margin: 0 12px 0 22px; }
.center { width: 60px; margin-right: 20px; background: #2f444a; }
```
